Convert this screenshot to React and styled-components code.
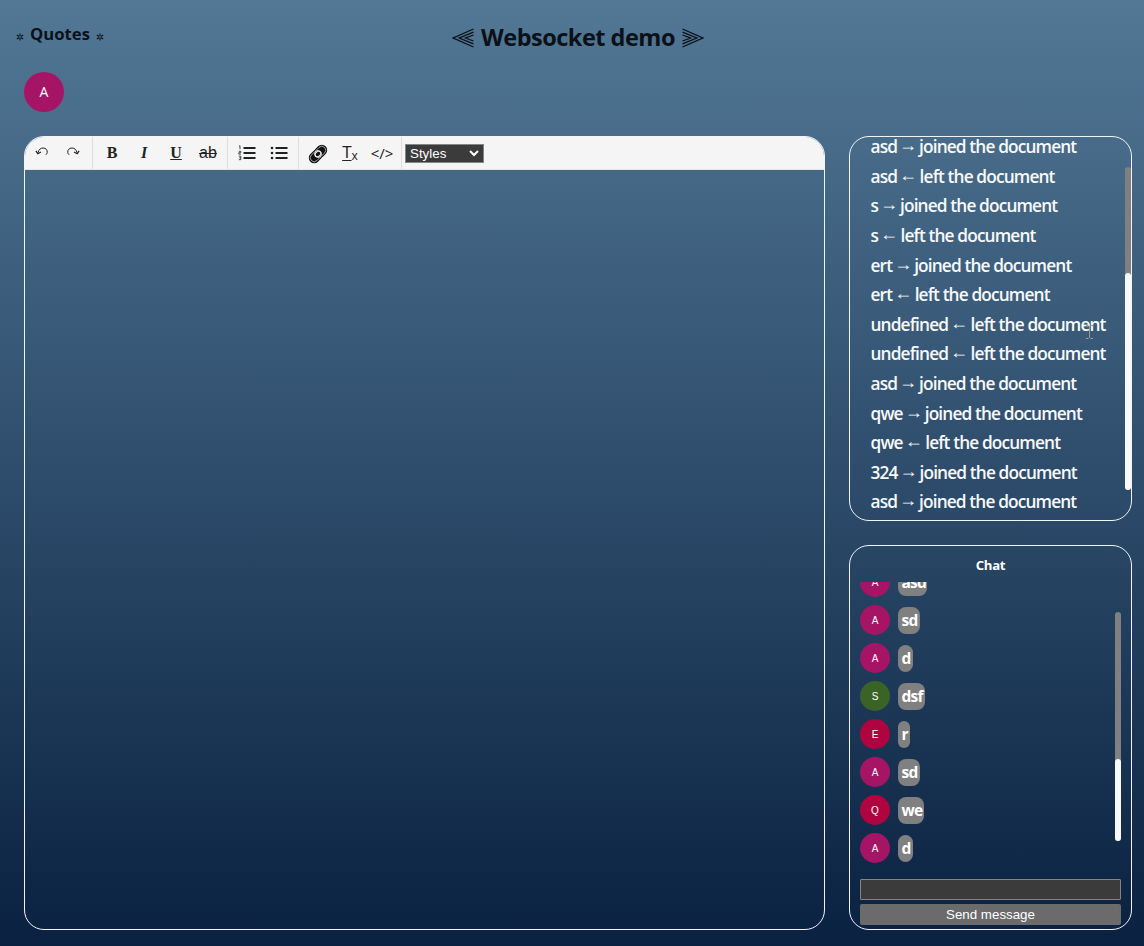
import React from "react";
import styled, { createGlobalStyle } from "styled-components";

const uiFont = `"Open Sans", "Noto Sans", sans-serif`;
const controlFont = `"Liberation Sans", Arial, sans-serif`;

const GlobalStyle = createGlobalStyle`
  * { box-sizing: border-box; }
  body { margin: 0; font-family: ${uiFont}; }
`;

const Page = styled.div`
  display: flex;
  flex-direction: column;
  height: 946px;
  overflow: hidden;
  background: linear-gradient(#527896, #0a2141);
`;

const Header = styled.header`
  display: grid;
  grid-template-columns: 120px 1fr 108px;
  height: 72px;
  color: #0b1116;
`;

const Brand = styled.div`
  display: flex;
  align-items: center;
  gap: 6px;
  height: 24px;
  margin: 21px 0 0 16px;
  font-size: 16.7px;
  font-weight: 700;
  letter-spacing: 0;
  white-space: nowrap;
  svg { margin-top: 7px; }
`;

const Title = styled.h1`
  display: flex;
  justify-content: center;
  align-items: center;
  gap: 7px;
  height: 32px;
  margin: 21px 0 0;
  font-size: 23.5px;
  font-weight: 700;
  white-space: nowrap;
  span { letter-spacing: -0.5px; }
  svg { margin-top: 2px; }
`;

const Avatar = styled.div`
  display: flex;
  align-items: center;
  justify-content: center;
  flex: none;
  width: ${(p) => p.$size}px;
  height: ${(p) => p.$size}px;
  padding-bottom: ${(p) => (p.$size > 30 ? 2 : 0)}px;
  border-radius: 50%;
  background: ${(p) => p.$color};
  color: #fff;
  font-family: ${(p) => (p.$size > 30 ? uiFont : controlFont)};
  font-size: ${(p) => (p.$size > 30 ? 14 : 10)}px;
`;

const Users = styled.div`
  height: 64px;
  padding-left: 24px;
`;

const Main = styled.main`
  display: grid;
  grid-template-columns: 801px 283px;
  gap: 24px;
  height: 794px;
  padding-left: 24px;
`;

const Panel = styled.section`
  display: flex;
  flex-direction: column;
  border: 1px solid #f2f5f8;
  border-radius: 20px;
  overflow: hidden;
  min-height: 0;
`;

const Side = styled.div`
  display: grid;
  grid-template-rows: 385px 385px;
  gap: 24px;
`;

const Toolbar = styled.div`
  display: flex;
  align-items: center;
  height: 33px;
  background: #f5f5f5;
  border-bottom: 1px solid #e3e6e8;
`;

const ToolGroup = styled.div`
  display: flex;
  height: 32px;
  padding: 0 3px;
  border-right: 1px solid #dedede;
  &:first-child { padding-left: 0; }
`;

const Tool = styled.button`
  display: flex;
  align-items: center;
  justify-content: center;
  width: 32px;
  height: 32px;
  padding: 0;
  border: 0;
  background: none;
  color: #222;
  font: ${(p) => p.$font || `16px ${controlFont}`};
  text-decoration: ${(p) => p.$line || "none"};
  text-decoration-thickness: 1px;
`;

const StyleSelect = styled.button`
  display: flex;
  align-items: center;
  justify-content: space-between;
  width: 79px;
  height: 19px;
  margin-left: 3px;
  padding: 0 4px;
  border: 1px solid #858585;
  background: #3b3b3b;
  color: #fff;
  font: 13.33px ${controlFont};
`;

const Log = styled.div`
  position: relative;
  display: flex;
  flex: 1;
  flex-direction: column;
  justify-content: flex-end;
  padding: 0 0 3px 20.5px;
  overflow: hidden;
`;

const LogRow = styled.div`
  display: flex;
  flex: none;
  height: 29.6px;
  line-height: 29.6px;
  color: #f8f9fa;
  font-size: 17.3px;
  font-weight: 600;
  letter-spacing: -0.87px;
  white-space: pre;
`;

const Arrow = styled.span`
  width: ${(p) => (p.$joined ? 22 : 22.5)}px;
  padding-left: 2px;
  font: 18px/26px ${controlFont};
  letter-spacing: 0;
`;

const ScrollTrack = styled.div`
  position: absolute;
  top: 30px;
  right: 0;
  display: flex;
  flex-direction: column;
  justify-content: flex-end;
  width: 6px;
  height: ${(p) => p.$height}px;
  border-radius: 3px;
  background: #808080;
`;

const ScrollThumb = styled.div`
  height: ${(p) => p.$height}px;
  border-radius: 3px;
  background: #f8f9fa;
`;

const Pointer = styled.svg`
  position: absolute;
  left: 235px;
  top: 187px;
`;

const ChatPanel = styled(Panel)`
  padding: 0 10px 4px;
`;

const ChatTitle = styled.h2`
  height: 36px;
  margin: 0;
  color: #fff;
  font-size: 13.2px;
  line-height: 38px;
  font-weight: 700;
  letter-spacing: -0.3px;
  text-align: center;
`;

const Messages = styled.div`
  position: relative;
  display: flex;
  flex-direction: column;
  justify-content: flex-end;
  gap: 8px;
  height: 285px;
  padding-bottom: 4px;
  overflow: hidden;
`;

const Message = styled.div`
  display: flex;
  flex: none;
  align-items: center;
  gap: 8px;
  height: 30px;
`;

const Bubble = styled.div`
  width: ${(p) => p.$width}px;
  height: 27px;
  padding-left: 3.5px;
  border-radius: 8px;
  background: #808080;
  color: #fff;
  font-size: 15.5px;
  font-weight: 700;
  line-height: 27px;
  letter-spacing: -0.8px;
`;

const ChatInput = styled.input`
  flex: none;
  width: 100%;
  height: 21px;
  margin-top: 12px;
  padding: 1px 4px;
  border: 1px solid #858585;
  border-radius: 1px;
  background: #3b3b3b;
  color: #fff;
`;

const SendButton = styled.button`
  flex: none;
  width: 100%;
  height: 21px;
  margin-top: 4px;
  padding: 0;
  border: 0;
  border-radius: 2px;
  background: #6b6b6b;
  color: #fff;
  font: 13.33px ${controlFont};
`;

const Asterisk = () => (
  <svg width="8" height="8" viewBox="0 0 8 8" stroke="currentColor" strokeWidth="1.1">
    <path d="M4 .5v2.7M4 4.8v2.7M.8 2.1l2.4 1.4M4.8 4.5l2.4 1.4M7.2 2.1L4.8 3.5M3.2 4.5L.8 5.9" />
  </svg>
);

const TripleAngle = ({ flip }) => (
  <svg width="22" height="20" viewBox="0 0 22 20" fill="none" stroke="currentColor" strokeWidth="1.3" transform={flip ? "scale(-1 1)" : undefined}>
    <path d="M21.5 1L1.2 10l20.3 9M21.5 4.2L7.2 10l14.3 5.8M21.5 7L13.5 10l8 3" />
  </svg>
);

const Undo = ({ flip }) => (
  <svg width="14" height="12" viewBox="0 0 14 12" fill="none" stroke="#222" transform={flip ? "translate(0 -1) scale(-1 1)" : "translate(1 -1)"}>
    <path d="M3 6.8C3.6 3.6 5.6 2 8 2c2.8 0 4.6 2 4.2 4.5-.1 1-.6 1.7-1.4 2.3" />
    <path d="M.9 4.8l1.9 2.9 3.2-1.7" strokeWidth="1.2" />
  </svg>
);

const ListIcon = ({ numbered }) => (
  <svg width="18" height="16" viewBox="0 0 18 16">
    <path d="M5.5 3h12M5.5 8h12M5.5 13h12" stroke="#222" strokeWidth="2" />
    {numbered ? (
      <g fill="none" stroke="#222" strokeWidth=".8">
        <path d="M1 1.3l1-.6v3.5M.8 6.3h2v1.4h-2v1.5h2.1M.8 11.2h2v3.5h-2M1.2 12.9h1.6" />
      </g>
    ) : (
      <g fill="#222">
        <circle cx="2" cy="3" r="1.3" />
        <circle cx="2" cy="8" r="1.3" />
        <circle cx="2" cy="13" r="1.3" />
      </g>
    )}
  </svg>
);

const LinkIcon = () => (
  <svg width="20" height="20" viewBox="0 0 20 20" fill="none" transform="translate(0 1)">
    <g transform="rotate(-45 10 10)">
      <rect x="-0.8" y="4.6" width="14.8" height="10.8" rx="5.4" fill="#111" />
      <rect x="6" y="4.6" width="14.8" height="10.8" rx="5.4" fill="#111" />
      <rect x="0.7" y="6.1" width="12.4" height="7.8" rx="3.9" stroke="#f5f5f5" strokeWidth=".6" />
      <rect x="6.9" y="6.1" width="12.4" height="7.8" rx="3.9" stroke="#f5f5f5" strokeWidth=".6" />
      <rect x="6.8" y="7.6" width="6.4" height="4.8" rx="2.4" stroke="#f5f5f5" strokeWidth="1.2" />
    </g>
  </svg>
);

const ClearFormat = styled.span`
  display: flex;
  align-items: baseline;
  padding-bottom: 3px;
  font: 17px ${uiFont};
  u { text-decoration-thickness: 1px; text-underline-offset: 2px; }
  small { font-size: 12px; line-height: 1; transform: translateY(2px); }
`;

const MAGENTA = "#a61565";
const RED = "#b00440";
const GREEN = "#3b6326";

const events = [
  ["asd", true], ["asd", false], ["s", true], ["s", false], ["ert", true],
  ["ert", false], ["undefined", false], ["undefined", false], ["asd", true],
  ["qwe", true], ["qwe", false], ["324", true], ["asd", true],
];

const messages = [
  ["A", MAGENTA, "asd", 29], ["A", MAGENTA, "sd", 22], ["A", MAGENTA, "d", 15],
  ["S", GREEN, "dsf", 27], ["E", RED, "r", 12], ["A", MAGENTA, "sd", 22],
  ["Q", RED, "we", 26], ["A", MAGENTA, "d", 15],
];

export default function App() {
  return (
    <Page>
      <GlobalStyle />
      <Header>
        <Brand><Asterisk /><span>Quotes</span><Asterisk /></Brand>
        <Title><TripleAngle /><span>Websocket demo</span><TripleAngle flip /></Title>
      </Header>
      <Users><Avatar $size={40} $color={MAGENTA}>A</Avatar></Users>
      <Main>
        <Panel>
          <Toolbar>
            <ToolGroup>
              <Tool><Undo /></Tool>
              <Tool><Undo flip /></Tool>
            </ToolGroup>
            <ToolGroup>
              <Tool $font={`bold 16px "Liberation Serif", serif`}>B</Tool>
              <Tool $font={`italic bold 16px "Liberation Serif", serif`}>I</Tool>
              <Tool $font={`bold 16px "Liberation Serif", serif`} $line="underline">U</Tool>
              <Tool $line="line-through">ab</Tool>
            </ToolGroup>
            <ToolGroup>
              <Tool><ListIcon numbered /></Tool>
              <Tool><ListIcon /></Tool>
            </ToolGroup>
            <ToolGroup>
              <Tool><LinkIcon /></Tool>
              <Tool><ClearFormat><u>T</u><small>x</small></ClearFormat></Tool>
              <Tool $font={`15px ${uiFont}`}>&lt;/&gt;</Tool>
            </ToolGroup>
            <StyleSelect>
              Styles
              <svg width="10" height="7" viewBox="0 0 10 7" fill="none" stroke="#fff" strokeWidth="2">
                <path d="M1 1l4 4 4-4" />
              </svg>
            </StyleSelect>
          </Toolbar>
        </Panel>
        <Side>
          <Panel>
            <Log>
              {events.map(([name, joined], i) => (
                <LogRow key={i}>
                  <span>{name}</span>
                  <Arrow $joined={joined}>{joined ? "→" : "←"}</Arrow>
                  <span>{joined ? "joined the document" : "left the document"}</span>
                </LogRow>
              ))}
              <ScrollTrack $height={323}><ScrollThumb $height={217} /></ScrollTrack>
              <Pointer width="9" height="16" viewBox="0 0 9 16" fill="none">
                <path d="M1 1.5h2.5M5.5 1.5H8M4.5 2v12M1 14.5h2.5M5.5 14.5H8" stroke="#9b9b91" />
              </Pointer>
            </Log>
          </Panel>
          <ChatPanel>
            <ChatTitle>Chat</ChatTitle>
            <Messages>
              {messages.map(([initial, color, text, width], i) => (
                <Message key={i}>
                  <Avatar $size={30} $color={color}>{initial}</Avatar>
                  <Bubble $width={width}>{text}</Bubble>
                </Message>
              ))}
              <ScrollTrack $height={229}><ScrollThumb $height={82} /></ScrollTrack>
            </Messages>
            <ChatInput />
            <SendButton>Send message</SendButton>
          </ChatPanel>
        </Side>
      </Main>
    </Page>
  );
}
